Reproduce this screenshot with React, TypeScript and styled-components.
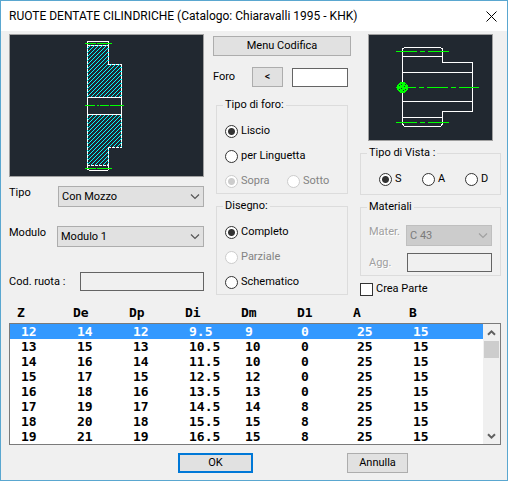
import React, { useState } from "react";
import styled, { createGlobalStyle, css } from "styled-components";

const GlobalStyle = createGlobalStyle`
  *, *::before, *::after { box-sizing: border-box; }
  body { margin: 0; background: #f0f0f0; }
  button, input, select { font: inherit; color: inherit; margin: 0; }
`;

const Dialog = styled.main`
  display: flex;
  flex-direction: column;
  min-height: 100vh;
  border: 1px solid #5aa7d0;
  background: #f0f0f0;
  color: #000;
  font: 11px/14px Roboto, "Liberation Sans", sans-serif;
`;

const TitleBar = styled.header`
  display: flex;
  align-items: center;
  justify-content: space-between;
  height: 30px;
  padding: 0 8px;
  background: #fff;
`;

const Title = styled.h1`
  margin: 0;
  font: 12px/16px Roboto, "Open Sans", sans-serif;
  white-space: nowrap;
`;

const CloseButton = styled.button`
  display: flex;
  padding: 2px;
  border: 0;
  background: none;
`;

const Columns = styled.div`
  display: grid;
  grid-template-columns: 195fr 138fr 141fr;
  column-gap: 9px;
  padding: 3px 6px 0 8px;
`;

const Column = styled.div`
  display: flex;
  flex-direction: column;
  min-width: 0;
`;

const Preview = styled.div<{ $inset?: boolean }>`
  border: 1px solid #a0a0a0;
  background: #212830;
  margin: ${(p) => (p.$inset ? "0 8px" : "0")};
  svg { display: block; width: 100%; shape-rendering: crispEdges; }
`;

const Field = styled.div<{ $top: number }>`
  display: flex;
  align-items: center;
  margin-top: ${(p) => p.$top}px;
`;

const FieldLabel = styled.label<{ $width: number; $disabled?: boolean; $raised?: boolean }>`
  flex: 0 0 ${(p) => p.$width}px;
  white-space: nowrap;
  ${(p) => p.$raised && css`align-self: flex-start;`}
  ${(p) => p.$disabled && css`color: #a0a0a0; text-shadow: 1px 1px #fff;`}
`;

const SelectBox = styled.div`
  position: relative;
  flex: 1;
  min-width: 0;
  svg {
    position: absolute;
    right: 4px;
    top: 7px;
    pointer-events: none;
  }
`;

const Select = styled.select`
  appearance: none;
  display: block;
  width: 100%;
  height: 21px;
  padding: 0 18px 0 3px;
  border: 1px solid #adadad;
  border-radius: 0;
  background: #e1e1e1;
  &:disabled {
    border-color: #bfbfbf;
    background: #ccc;
    color: #7b7b7b;
    opacity: 1;
  }
`;

const TextBox = styled.input`
  flex: 1;
  min-width: 0;
  height: 19px;
  padding: 0 3px;
  border: 1px solid #646464;
  background: #fff;
  &:read-only, &:disabled { background: #f0f0f0; }
`;

const Button = styled.button<{ $width?: number; $default?: boolean }>`
  height: 20px;
  width: ${(p) => (p.$width ? `${p.$width}px` : "100%")};
  padding: 0;
  border: ${(p) => (p.$default ? "2px solid #0078d7" : "1px solid #adadad")};
  background: #e1e1e1;
`;

const ForoRow = styled.div`
  display: flex;
  align-items: center;
  margin: 11px 3px 0 0;
`;

const ForoButton = styled(Button)`
  flex: none;
  margin-right: 9px;
`;

const Group = styled.fieldset<{ $top: number; $inset?: boolean }>`
  min-width: 0;
  margin: ${(p) => p.$top}px ${(p) => (p.$inset ? "3px" : "0")} 0;
  padding: 0 8px;
  border: 1px solid #dcdcdc;
`;

const Legend = styled.legend`
  padding: 0 2px;
  margin-left: -2px;
`;

const Options = styled.div`
  display: flex;
  flex-direction: column;
  gap: 11px;
  padding: 12px 0 5px;
`;

const OptionRow = styled.div`
  display: grid;
  grid-template-columns: 62px 1fr;
`;

const ViewRow = styled.div`
  display: grid;
  grid-template-columns: repeat(3, 43px);
  padding: 12px 0 8px 10px;
`;

const Option = styled.label<{ $disabled?: boolean }>`
  display: flex;
  align-items: center;
  gap: 3px;
  white-space: nowrap;
  color: ${(p) => (p.$disabled ? "#838383" : "#000")};
`;

const Radio = styled.input`
  appearance: none;
  flex: none;
  width: 13px;
  height: 13px;
  border: 1px solid #333;
  border-radius: 50%;
  background: #fff;
  &:checked { background: radial-gradient(circle, #333 3px, #fff 4px); }
  &:disabled { border-color: #ccc; }
  &:disabled:checked { background: radial-gradient(circle, #ccc 3px, #fff 4px); }
`;

const CheckBox = styled.input`
  appearance: none;
  flex: none;
  width: 13px;
  height: 13px;
  border: 1px solid #333;
  background: #fff;
  &:checked { box-shadow: inset 0 0 0 2px #fff; background: #333; }
`;

const PartOption = styled(Option)`
  margin-top: 6px;
`;

const ListArea = styled.section`
  display: flex;
  align-items: flex-end;
  padding: 9px 6px 0 8px;
`;

const Table = styled.table`
  display: block;
  flex: 1;
  min-width: 0;
  font: bold 13px/15px "DejaVu Sans Mono", "Liberation Mono", monospace;
  thead { display: block; padding: 0 0 3px 8px; }
  tbody {
    display: block;
    border: solid #7a7a7a;
    border-width: 1px 0 1px 1px;
    background: #fff;
  }
`;

const Row = styled.tr<{ $selected?: boolean }>`
  display: grid;
  grid-template-columns: repeat(8, 56px);
  ${(p) => p.$selected && css`background: #3399ff; color: #fff;`}
  th, td { padding: 0; text-align: left; white-space: nowrap; }
  td { padding-left: 11px; }
`;

const ScrollBar = styled.div`
  display: flex;
  flex-direction: column;
  align-items: center;
  width: 18px;
  height: 122px;
  padding: 0 1px;
  border: solid #7a7a7a;
  border-width: 1px 1px 1px 0;
  background: #f0f0f0;
`;

const ScrollButton = styled.button`
  display: flex;
  align-items: center;
  justify-content: center;
  width: 100%;
  height: 17px;
  padding: 0;
  border: 0;
  background: none;
`;

const Thumb = styled.div`
  width: 100%;
  height: 17px;
  margin-bottom: auto;
  background: #cdcdcd;
`;

const Footer = styled.footer`
  display: grid;
  grid-template-columns: 169fr 169fr 160fr;
  padding: 8px 0 7px 8px;
`;

const Chevron = ({ color = "#555" }: { color?: string }) => (
  <svg width="10" height="7" viewBox="0 0 10 7" fill="none" stroke={color}>
    <path d="M1 1.5 5 5.5 9 1.5" strokeWidth="1.2" />
  </svg>
);

const ScrollArrow = ({ up }: { up?: boolean }) => (
  <svg width="9" height="8" viewBox="0 0 9 8" fill="none" stroke="#606060">
    <path d={up ? "M1 5.8 4.5 2.3 8 5.8" : "M1 2.2 4.5 5.7 8 2.2"} strokeWidth="2" />
  </svg>
);

const GearSection = () => (
  <svg height="141" viewBox="10 35 193 141" role="img" aria-label="Sezione ruota">
    <defs>
      <pattern id="hatch" width="4" height="4" patternUnits="userSpaceOnUse">
        <path d="M0 3h1v1h-1zM1 2h1v1h-1zM2 1h1v1h-1zM3 0h1v1h-1z" fill="#00ffff" />
      </pattern>
    </defs>
    <path d="M87 45H108V64H121V97H87ZM87 114H121V147H108V165H87Z" fill="url(#hatch)" />
    <path
      d="M87.5 45V97M87.5 115V165M108.5 45V64M121.5 64V97M121.5 115V147M108.5 147V165"
      fill="none"
      stroke="#00ffff"
    />
    <g fill="none" stroke="#fff">
      <path d="M87.5 45V41.5H108.5V45M87.5 97V115M121.5 97V115M87.5 165V169.5H89M89 170.5H108M108.5 165V170M87 97.5H122M87 114.5H122" />
      <path d="M87.5 45V97M87.5 115V165M108.5 45V64M121.5 64V97M121.5 115V147M108.5 147V165M87 45.5H109M108 64.5H122M108 147.5H122M87 165.5H109" strokeDasharray="3 1" />
    </g>
    <path d="M85 43.5H96M97 43.5H112M85 105.5H95M97 105.5H99M100 105.5H109M110 105.5H124M85 168.5H96M97 168.5H112" stroke="#00ff00" />
  </svg>
);

const GearView = () => (
  <svg height="105" viewBox="369 35 123 105" role="img" aria-label="Vista ruota">
    <path
      d="M402.5 49V124L404.5 126.5H440.5L442.5 124V111.5H472.5V62.5H442.5V49L440.5 47.5H404.5L402.5 49M402 56.5H442M402 72.5H472M402 101.5H472M402 117.5H442M442.5 111V118"
      fill="none"
      stroke="#fff"
    />
    <path
      d="M396 51.5H417M420 51.5H425M428 51.5H449M396 87.5H416M419 87.5H424M427 87.5H448M451 87.5H456M459 87.5H479M396 122.5H417M420 122.5H425M428 122.5H449"
      stroke="#00ff00"
    />
    <circle cx="402.5" cy="87.5" r="5.5" fill="#00ff00" />
    <path d="M399 85h1v1h-1zM401 84h1v1h-1zM405 84h1v1h-1zM404 86h1v1h-1zM399 89h1v1h-1zM401 88h1v1h-1zM403 90h1v1h-1zM405 89h1v1h-1z" fill="#212830" />
  </svg>
);

const headers = ["Z", "De", "Dp", "Di", "Dm", "D1", "A", "B"];
const rows = [
  ["12", "14", "12", "9.5", "9", "0", "25", "15"],
  ["13", "15", "13", "10.5", "10", "0", "25", "15"],
  ["14", "16", "14", "11.5", "10", "0", "25", "15"],
  ["15", "17", "15", "12.5", "12", "0", "25", "15"],
  ["16", "18", "16", "13.5", "13", "0", "25", "15"],
  ["17", "19", "17", "14.5", "14", "8", "25", "15"],
  ["18", "20", "18", "15.5", "15", "8", "25", "15"],
  ["19", "21", "19", "16.5", "15", "8", "25", "15"],
];

interface RadioOptionProps {
  name: string;
  label: string;
  checked?: boolean;
  disabled?: boolean;
}

const RadioOption = ({ name, label, checked, disabled }: RadioOptionProps) => (
  <Option $disabled={disabled}>
    <Radio type="radio" name={name} defaultChecked={checked} disabled={disabled} />
    {label}
  </Option>
);

export default function App() {
  const [selected, setSelected] = useState(0);

  return (
    <>
      <GlobalStyle />
      <Dialog>
        <TitleBar>
          <Title>RUOTE DENTATE CILINDRICHE (Catalogo: Chiaravalli 1995 - KHK)</Title>
          <CloseButton aria-label="Chiudi">
            <svg width="11" height="11" viewBox="0 0 11 11" stroke="#000">
              <path d="M.5.5 10.5 10.5M10.5.5.5 10.5" />
            </svg>
          </CloseButton>
        </TitleBar>

        <Columns>
          <Column>
            <Preview>
              <GearSection />
            </Preview>
            <Field $top={9}>
              <FieldLabel htmlFor="tipo" $width={49} $raised>Tipo</FieldLabel>
              <SelectBox>
                <Select id="tipo"><option>Con Mozzo</option></Select>
                <Chevron />
              </SelectBox>
            </Field>
            <Field $top={19}>
              <FieldLabel htmlFor="modulo" $width={48} $raised>Modulo</FieldLabel>
              <SelectBox>
                <Select id="modulo"><option>Modulo 1</option></Select>
                <Chevron />
              </SelectBox>
            </Field>
            <Field $top={25}>
              <FieldLabel htmlFor="codice" $width={71}>Cod. ruota :</FieldLabel>
              <TextBox id="codice" readOnly />
            </Field>
          </Column>

          <Column>
            <Field $top={2}><Button>Menu Codifica</Button></Field>
            <ForoRow>
              <FieldLabel htmlFor="foro" $width={39}>Foro</FieldLabel>
              <ForoButton $width={31} aria-label="Seleziona foro">&lt;</ForoButton>
              <TextBox id="foro" />
            </ForoRow>
            <Group $top={11} $inset>
              <Legend>Tipo di foro:</Legend>
              <Options>
                <RadioOption name="foro" label="Liscio" checked />
                <RadioOption name="foro" label="per Linguetta" />
                <OptionRow>
                  <RadioOption name="posizione" label="Sopra" checked disabled />
                  <RadioOption name="posizione" label="Sotto" disabled />
                </OptionRow>
              </Options>
            </Group>
            <Group $top={5} $inset>
              <Legend>Disegno:</Legend>
              <Options>
                <RadioOption name="disegno" label="Completo" checked />
                <RadioOption name="disegno" label="Parziale" disabled />
                <RadioOption name="disegno" label="Schematico" />
              </Options>
            </Group>
          </Column>

          <Column>
            <Preview $inset>
              <GearView />
            </Preview>
            <Group $top={5}>
              <Legend>Tipo di Vista :</Legend>
              <ViewRow>
                <RadioOption name="vista" label="S" checked />
                <RadioOption name="vista" label="A" />
                <RadioOption name="vista" label="D" />
              </ViewRow>
            </Group>
            <Group $top={5}>
              <Legend>Materiali</Legend>
              <Field $top={11}>
                <FieldLabel htmlFor="mater" $width={37} $disabled $raised>Mater.</FieldLabel>
                <SelectBox>
                  <Select id="mater" disabled><option>C 43</option></Select>
                  <Chevron color="#a0a0a0" />
                </SelectBox>
              </Field>
              <Field $top={7}>
                <FieldLabel htmlFor="agg" $width={38} $disabled>Agg.</FieldLabel>
                <TextBox id="agg" disabled />
              </Field>
              <Field $top={3} />
            </Group>
            <PartOption>
              <CheckBox type="checkbox" />
              Crea Parte
            </PartOption>
          </Column>
        </Columns>

        <ListArea>
          <Table>
            <thead>
              <Row>{headers.map((h) => <th key={h} scope="col">{h}</th>)}</Row>
            </thead>
            <tbody>
              {rows.map((row, i) => (
                <Row key={row[0]} $selected={i === selected} onClick={() => setSelected(i)}>
                  {row.map((cell, j) => <td key={headers[j]}>{cell}</td>)}
                </Row>
              ))}
            </tbody>
          </Table>
          <ScrollBar>
            <ScrollButton aria-label="Su"><ScrollArrow up /></ScrollButton>
            <Thumb />
            <ScrollButton aria-label="Giù"><ScrollArrow /></ScrollButton>
          </ScrollBar>
        </ListArea>

        <Footer>
          <span />
          <Button $width={75} $default>OK</Button>
          <Button $width={61}>Annulla</Button>
        </Footer>
      </Dialog>
    </>
  );
}
